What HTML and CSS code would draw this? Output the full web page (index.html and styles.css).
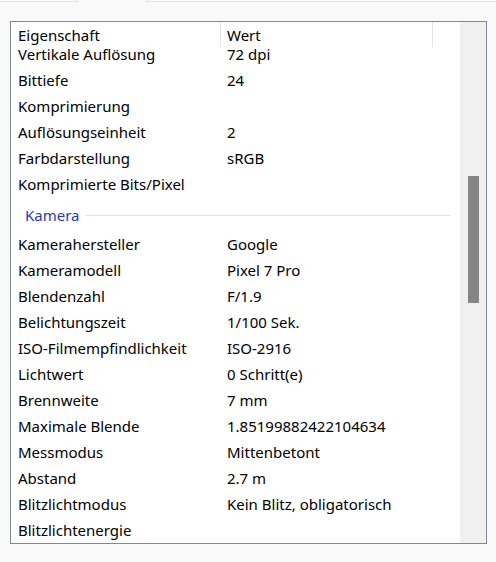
FILE: index.html
```html
<!DOCTYPE html>
<html lang="de">
<head>
<meta charset="utf-8">
<title>Eigenschaften</title>
<link rel="stylesheet" href="styles.css">
</head>
<body>
<div class="tabs">
  <div class="tab-gap"></div>
  <div class="tab-active"></div>
  <div class="tab-rest"></div>
</div>
<div class="listview">
  <div class="content">
    <div class="header">
      <div class="hcell c1">Eigenschaft</div>
      <div class="hcell c2">Wert</div>
      <div class="hcell c3"></div>
    </div>
    <div class="body">
      <div class="rows">
        <div class="row first"><span class="k">Vertikale Auflösung</span><span class="v">72 dpi</span></div>
        <div class="row"><span class="k">Bittiefe</span><span class="v">24</span></div>
        <div class="row"><span class="k">Komprimierung</span><span class="v"></span></div>
        <div class="row"><span class="k">Auflösungseinheit</span><span class="v">2</span></div>
        <div class="row"><span class="k">Farbdarstellung</span><span class="v">sRGB</span></div>
        <div class="row"><span class="k">Komprimierte Bits/Pixel</span><span class="v"></span></div>
        <div class="group"><span class="gtitle">Kamera</span><span class="gline"></span></div>
        <div class="row"><span class="k">Kamerahersteller</span><span class="v">Google</span></div>
        <div class="row"><span class="k">Kameramodell</span><span class="v">Pixel 7 Pro</span></div>
        <div class="row"><span class="k">Blendenzahl</span><span class="v">F/1.9</span></div>
        <div class="row"><span class="k">Belichtungszeit</span><span class="v">1/100 Sek.</span></div>
        <div class="row"><span class="k">ISO-Filmempfindlichkeit</span><span class="v">ISO-2916</span></div>
        <div class="row"><span class="k">Lichtwert</span><span class="v">0 Schritt(e)</span></div>
        <div class="row"><span class="k">Brennweite</span><span class="v">7 mm</span></div>
        <div class="row"><span class="k">Maximale Blende</span><span class="v">1.85199882422104634</span></div>
        <div class="row"><span class="k">Messmodus</span><span class="v">Mittenbetont</span></div>
        <div class="row"><span class="k">Abstand</span><span class="v">2.7 m</span></div>
        <div class="row"><span class="k">Blitzlichtmodus</span><span class="v">Kein Blitz, obligatorisch</span></div>
        <div class="row"><span class="k">Blitzlichtenergie</span><span class="v"></span></div>
      </div>
    </div>
  </div>
  <div class="scrollbar"><div class="thumb"></div></div>
</div>
</body>
</html>
```
FILE: styles.css
```css
* { box-sizing: border-box; }
html, body { margin: 0; padding: 0; }
body {
  width: 496px;
  height: 562px;
  background: #f9f9f9;
  font-family: "Noto Sans", "Open Sans", sans-serif;
  font-size: 15px;
  color: #000;
  overflow: hidden;
}
.tabs { display: flex; height: 2px; }
.tab-gap { width: 77px; border-bottom: 1px solid #e2e2e2; }
.tab-active { width: 70px; border-left: 1px solid #e2e2e2; border-right: 1px solid #e2e2e2; }
.tab-rest { flex: 1; border-bottom: 1px solid #e2e2e2; }

.listview {
  margin: 19px 0 0 10px;
  width: 477px;
  height: 523px;
  border: 1px solid #828790;
  background: #fff;
  display: flex;
}
.content { flex: 1; display: flex; flex-direction: column; min-width: 0; }
.header { display: flex; height: 25px; flex: none; }
.hcell { height: 25px; padding: 3px 0 0 7px; line-height: 20px; border-right: 1px solid #e5e5e5; }
.c1 { width: 210px; }
.c2 { width: 212px; padding-left: 6px; }
.c3 { flex: 1; border-right: none; }
.body { flex: 1; }
.row { display: flex; height: 26px; align-items: center; }
.row.first { height: 20px; padding-bottom: 6px; line-height: 14px; }
.k { width: 210px; padding-left: 7px; white-space: nowrap; }
.v { padding-left: 6px; white-space: nowrap; }
.group { display: flex; align-items: center; height: 34px; padding: 2px 10px 0 14px; }
.gtitle { color: #1d3cc0; }
.gline { flex: 1; height: 1px; background: #d9e1ef; margin-left: 6px; }
.scrollbar { width: 26px; flex: none; background: #f0f0f0; padding: 154px 7px 0 8px; }
.thumb { height: 127px; background: #858585; }
```
